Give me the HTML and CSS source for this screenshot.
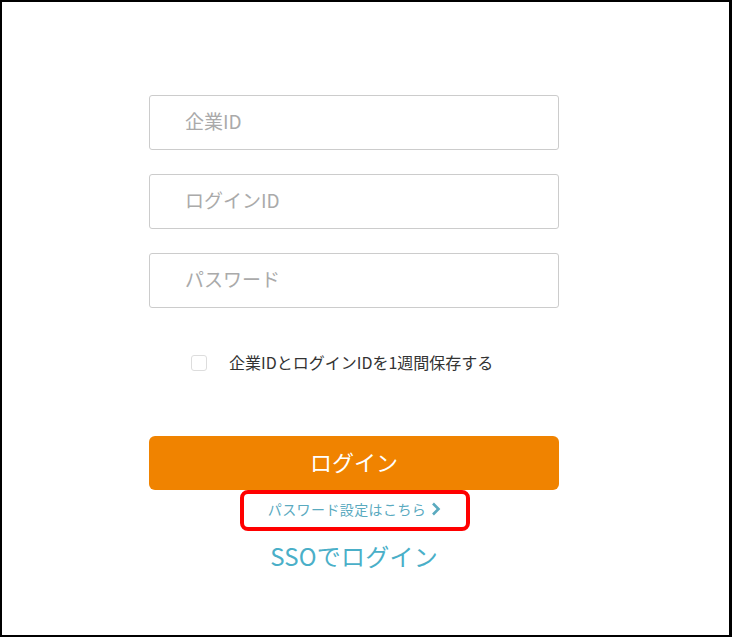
FILE: index.html
```html
<!DOCTYPE html>
<html lang="ja">
  <head>
    <meta charset="UTF-8" />
    <meta name="viewport" content="width=device-width, initial-scale=1.0" />
    <title>ログイン</title>
    <link rel="stylesheet" href="styles.css">
  </head>
  <body>
    <div class="frame">
      <form class="login-form" onsubmit="return false">
        <input class="field" type="text" placeholder="企業ID" />
        <input class="field" type="text" placeholder="ログインID" />
        <input class="field" type="password" placeholder="パスワード" />

        <label class="remember">
          <span class="check"></span>
          <span class="remember-text">企業IDとログインIDを1週間保存する</span>
        </label>

        <button class="btn-login" type="submit">ログイン</button>

        <div class="link-row">
          <a href="#" class="pw-link">パスワード設定はこちら
            <svg class="chevron" width="10" height="14" viewBox="0 0 10 14">
              <path d="M2 1.5 L7.5 7 L2 12.5" fill="none" stroke="currentColor" stroke-width="2.6" />
            </svg>
          </a>
        </div>

        <a href="#" class="sso-link">SSOでログイン</a>
      </form>
    </div>
  </body>
</html>
```

FILE: styles.css
```css
body {
  margin: 0;
  font-family: "Noto Sans CJK JP", "Noto Sans", sans-serif;
  background-color: #fff;
}

.frame {
  width: 732px;
  height: 637px;
  box-sizing: border-box;
  border: 2px solid #000;
  border-right-width: 3px;
}

.login-form {
  width: 410px;
  margin-left: 147px;
  padding-top: 93px;
  display: flex;
  flex-direction: column;
}

.field {
  height: 55px;
  box-sizing: border-box;
  border: 1px solid #ccc;
  border-radius: 3px;
  padding: 0 0 4px 35px;
  margin: 0 0 24px 0;
  font-family: inherit;
  font-size: 19px;
  color: #333;
  outline: none;
}

.field::placeholder {
  color: #aaa;
}

.remember {
  display: flex;
  align-items: center;
  height: 18px;
  margin-top: 22px;
  padding-left: 42px;
}

.check {
  width: 16px;
  height: 16px;
  box-sizing: border-box;
  border: 1px solid #ddd;
  border-radius: 3px;
}

.remember-text {
  margin-left: 22px;
  margin-top: -2px;
  font-size: 16px;
  color: #333;
}

.btn-login {
  height: 54px;
  margin-top: 64px;
  padding-bottom: 5px;
  border: none;
  border-radius: 6px;
  background-color: #f08300;
  color: #fff;
  font-family: inherit;
  font-size: 22px;
  cursor: pointer;
}

.link-row {
  display: flex;
  justify-content: center;
}

.pw-link {
  display: flex;
  align-items: center;
  gap: 5px;
  box-sizing: border-box;
  width: 230px;
  height: 41px;
  justify-content: center;
  padding-bottom: 4px;
  border: 4px solid #f00;
  border-radius: 8px;
  margin-left: 1px;
  color: #5aaabf;
  font-size: 14px;
  letter-spacing: 0.4px;
  text-decoration: none;
}

.chevron {
  display: block;
  margin-top: 1px;
}

.sso-link {
  align-self: center;
  margin-top: 7px;
  font-size: 24px;
  letter-spacing: 0.2px;
  color: #4aafc8;
  text-decoration: none;
}
```
